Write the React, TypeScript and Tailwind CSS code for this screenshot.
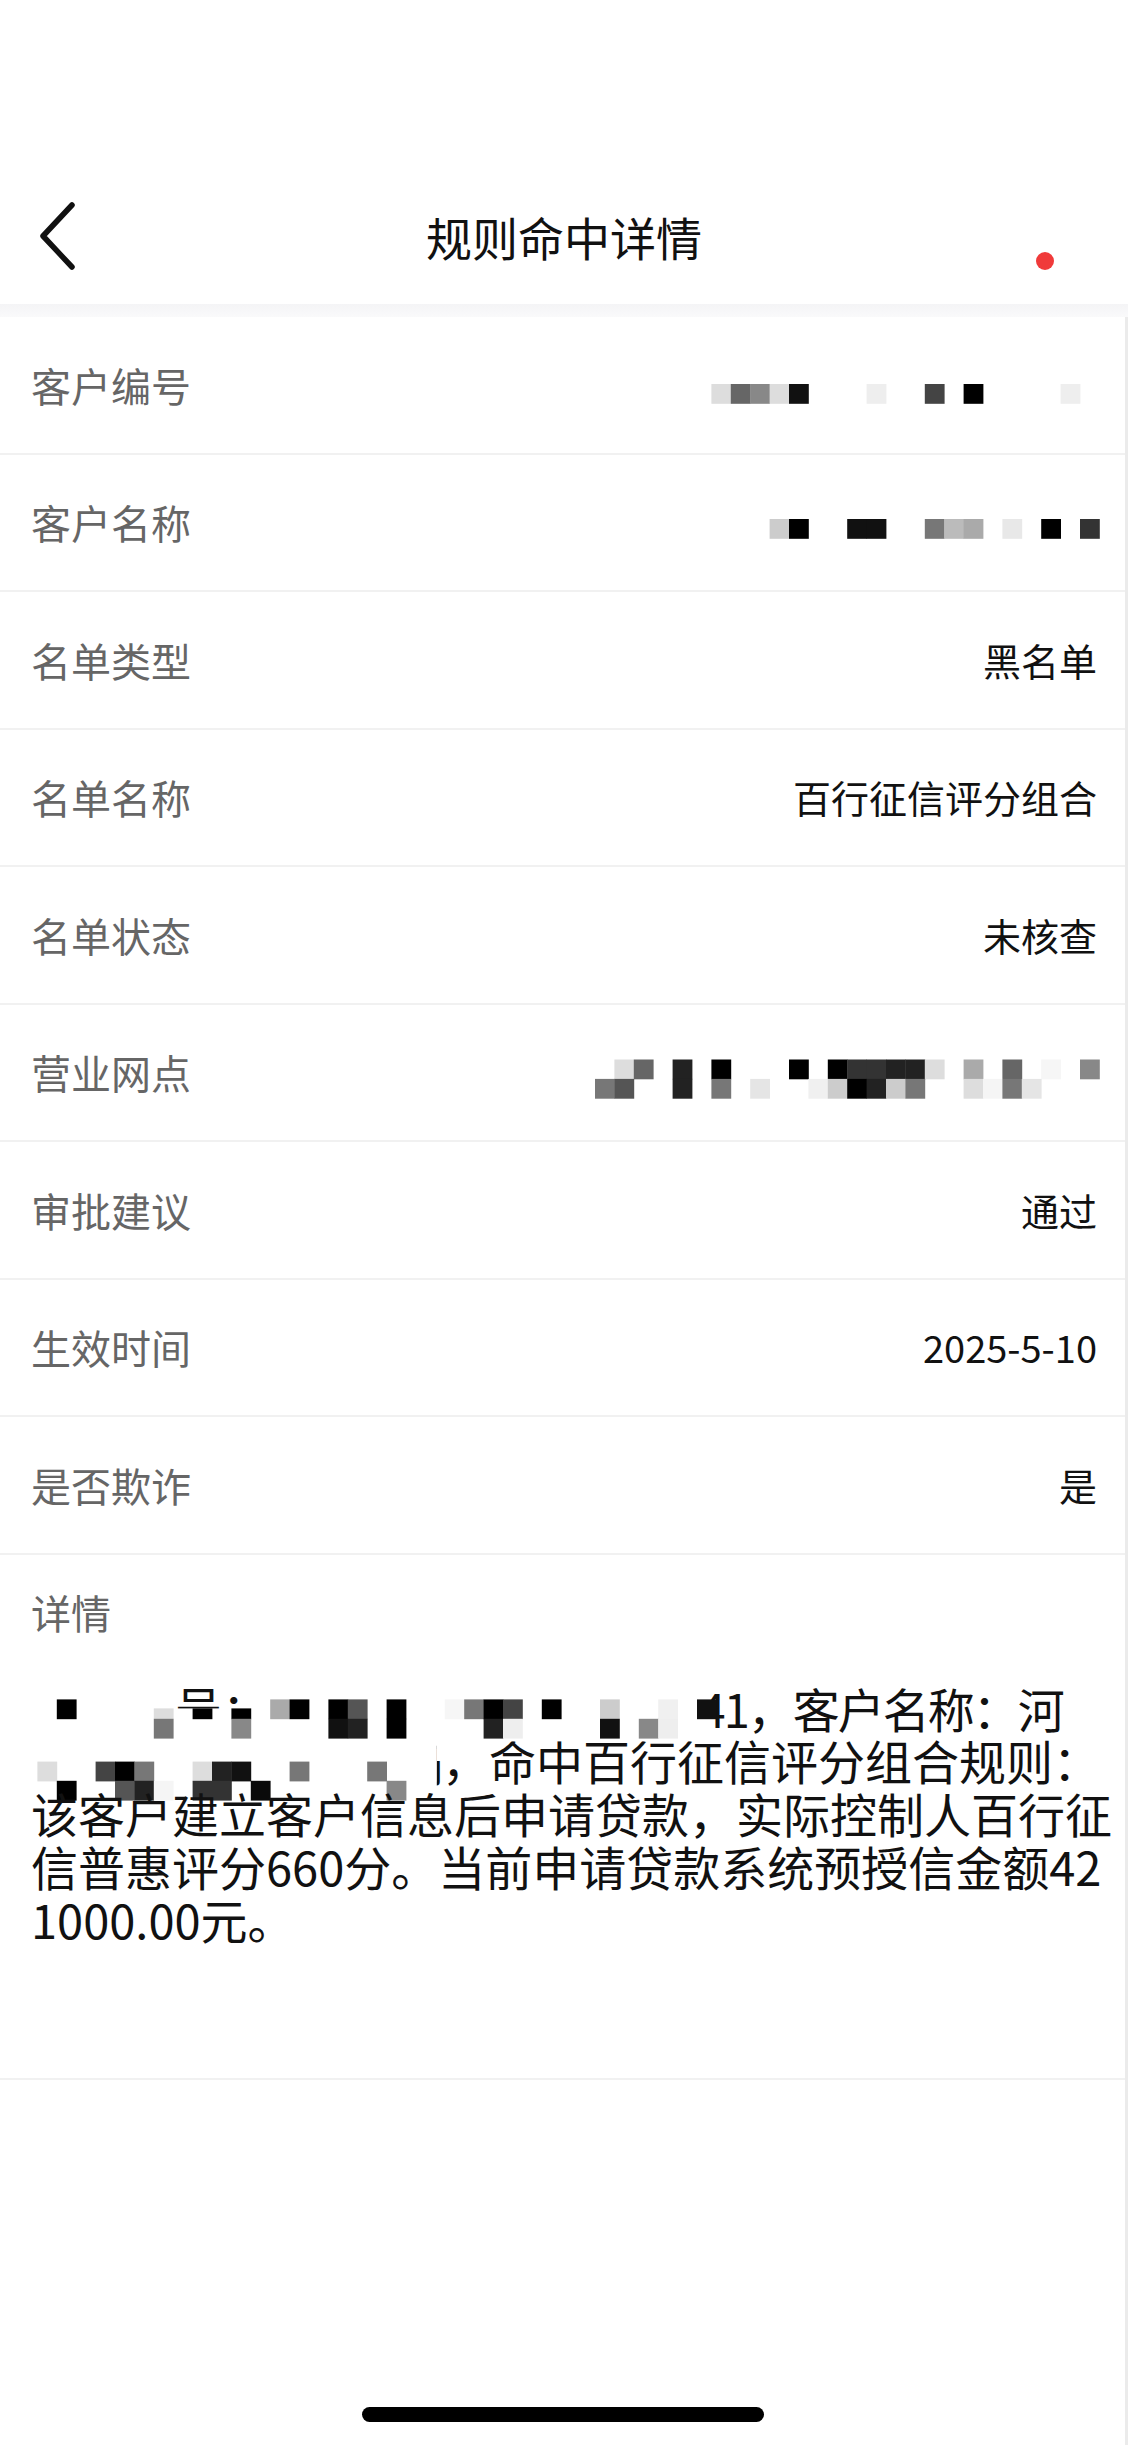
import React from 'react';

const S = 19.4;

type Cell = [number, string, number?, number?];

// 打码马赛克（截图中被遮挡的内容）
const Mosaic = ({ width, height, rows, children, className }: { width: number; height: number; rows: { y: number; cells: Cell[] }[]; children?: React.ReactNode; className?: string }) => (
  <svg width={width} height={height} className={className} style={{ overflow: 'visible' }}>
    {children}
    {rows.map((r, ri) =>
      r.cells.map(([j, color, dy = 0, h = S]) => (
        <rect key={`${ri}-${j}`} x={j * S} y={r.y + dy} width={S + 0.4} height={h + 0.4} fill={color} />
      ))
    )}
  </svg>
);

const rowMosaics: Record<string, { height: number; rows: { y: number; cells: Cell[] }[] }> = {
  id: {
    height: 40,
    rows: [{ y: 19, cells: [[6, '#ddd'], [7, '#666'], [8, '#888'], [9, '#ddd'], [10, '#111'], [14, '#eee'], [17, '#444'], [19, '#000'], [24, '#eee']] }],
  },
  name: {
    height: 40,
    rows: [{ y: 17, cells: [[9, '#ccc'], [10, '#000'], [13, '#111'], [14, '#111'], [17, '#777'], [18, '#bbb'], [19, '#aaa'], [21, '#e8e8e8'], [23, '#000'], [25, '#333']] }],
  },
  branch: {
    height: 50,
    rows: [
      { y: 12.5, cells: [[1, '#ddd'], [2, '#666'], [4, '#222'], [6, '#000'], [10, '#000'], [12, '#000'], [13, '#333'], [14, '#333'], [15, '#222'], [16, '#222'], [17, '#ddd'], [19, '#aaa'], [21, '#666'], [23, '#f6f6f6'], [25, '#888']] },
      { y: 31.9, cells: [[0, '#777'], [1, '#555'], [4, '#222'], [6, '#777'], [8, '#e5e5e5'], [11, '#f0f0f0'], [12, '#ccc'], [13, '#000'], [14, '#222'], [15, '#ccc'], [16, '#777'], [19, '#ddd'], [20, '#f5f5f5'], [21, '#777'], [22, '#e5e5e5']] },
    ],
  },
};

const rows: { label: string; value?: string; mosaic?: string }[] = [
  { label: '客户编号', mosaic: 'id' },
  { label: '客户名称', mosaic: 'name' },
  { label: '名单类型', value: '黑名单' },
  { label: '名单名称', value: '百行征信评分组合' },
  { label: '名单状态', value: '未核查' },
  { label: '营业网点', mosaic: 'branch' },
  { label: '审批建议', value: '通过' },
  { label: '生效时间', value: '2025-5-10' },
  { label: '是否欺诈', value: '是' },
];

const line1Rows = [
  {
    y: 17.4,
    cells: [
      [2, '#000'], [7, '#ddd', 9, 10.4], [9, '#000', 9, 10.4], [11, '#000', 9, 10.4], [13, '#aaa'], [14, '#000'], [16, '#000'], [17, '#555'],
      [19, '#000'], [22, '#f6f6f6'], [23, '#777'], [24, '#000'], [25, '#444'], [27, '#000'], [30, '#ccc'], [33, '#f0f0f0'], [35, '#111'],
    ] as Cell[],
  },
  {
    y: 36.8,
    cells: [[7, '#777'], [11, '#888'], [16, '#111'], [17, '#222'], [19, '#000'], [24, '#222'], [25, '#eee'], [30, '#111'], [32, '#888'], [33, '#eee']] as Cell[],
  },
];

const line2Rows = [
  { y: 27.6, cells: [[1, '#ddd'], [4, '#444'], [5, '#000'], [6, '#777'], [9, '#ddd'], [10, '#222'], [11, '#111'], [14, '#777'], [18, '#777']] as Cell[] },
  { y: 46.8, cells: [[2, '#000'], [5, '#555'], [6, '#222'], [7, '#f5f5f5'], [9, '#333'], [10, '#333'], [12, '#0a0a0a'], [19, '#888']] as Cell[] },
];

const cjk = "'Noto Sans CJK SC', sans-serif";

export default function App() {
  return (
    <div className="flex h-[2445px] w-[1128px] flex-col overflow-hidden bg-white font-['Noto_Sans_CJK_SC','Noto_Sans',sans-serif]">
      {/* 状态栏留白 */}
      <div className="h-[180px]" />

      {/* 导航栏 */}
      <div className="grid h-[112px] grid-cols-[1fr_auto_1fr] items-center">
        <div className="pl-[36px]">
          <svg width="44" height="76" viewBox="0 0 44 76">
            <polyline points="36,7 7,38 36,69" fill="none" stroke="#111" strokeWidth="5.5" strokeLinecap="round" strokeLinejoin="round" />
          </svg>
        </div>
        <h1 className="text-[46px] font-normal leading-none text-[#111]">规则命中详情</h1>
        <div className="flex justify-end pr-[74px]">
          <span className="mt-[50px] h-[18px] w-[18px] rounded-full bg-[#f03a3a]" />
        </div>
      </div>
      <div className="h-[12px]" />
      <div className="h-[13px] bg-gradient-to-b from-[#f4f4f6] to-[#fafafb]" />

      <div className="flex flex-1 flex-col border-r-[3px] border-[#ebebeb]">
        {/* 信息列表 */}
        {rows.map((row) => (
          <div key={row.label} className="flex h-[137.5px] items-center justify-between border-b-2 border-[#f1f1f1] pl-[31px] pr-[28px]">
            <span className="text-[40px] leading-none text-[#666]">{row.label}</span>
            {row.mosaic ? (
              <Mosaic width={26 * S} height={rowMosaics[row.mosaic].height} rows={rowMosaics[row.mosaic].rows} className="-mr-[2px]" />
            ) : (
              <span className="text-[38px] leading-none text-[#111]">{row.value}</span>
            )}
          </div>
        ))}

        {/* 详情 */}
        <div className="h-[525px] border-b-2 border-[#f1f1f1] pl-[31px] pr-[28px] pt-[29px]">
          <div className="text-[40px] leading-[56px] text-[#666]">详情</div>
          <div className="mt-[42px] text-[47px] leading-[52.75px] text-[#111]">
            <div className="flex h-[52.75px] items-start whitespace-nowrap">
              <Mosaic width={36 * S} height={60} rows={line1Rows} className="relative z-10 -ml-[12.8px] shrink-0">
                <text x="157" y="45" fontSize="47" fill="#111" fontFamily={cjk}>号：</text>
                <rect x="0" y="17.4" width="140" height="42" fill="#fff" />
                <rect x="140" y="26.4" width="100" height="33" fill="#fff" />
                <rect x="240" y="17.4" width={35 * S - 240} height="42" fill="#fff" />
              </Mosaic>
              <span className="-ml-[17px] tracking-[-2px]">41，客户名称：河</span>
            </div>
            <div className="flex h-[52.75px] items-start whitespace-nowrap">
              <Mosaic width={423.8} height={68} rows={line2Rows} className="-ml-[12.8px] shrink-0">
                <text x="380" y="48" fontSize="47" fill="#111" fontFamily={cjk}>司</text>
                <rect x="0" y="0" width="418.8" height="68" fill="#fff" />
                <rect x="418.8" y="0" width="10" height="27" fill="#fff" />
              </Mosaic>
              <span>，命中百行征信评分组合规则：</span>
            </div>
            <div className="h-[52.75px] whitespace-nowrap">该客户建立客户信息后申请贷款，实际控制人百行征</div>
            <div className="h-[52.75px] whitespace-nowrap">信普惠评分660分。当前申请贷款系统预授信金额42</div>
            <div className="h-[52.75px] whitespace-nowrap">1000.00元。</div>
          </div>
        </div>

        {/* 底部 Home 指示条 */}
        <div className="mt-auto flex justify-center pb-[23px]">
          <div className="h-[15px] w-[402px] rounded-full bg-black" />
        </div>
      </div>
    </div>
  );
}
